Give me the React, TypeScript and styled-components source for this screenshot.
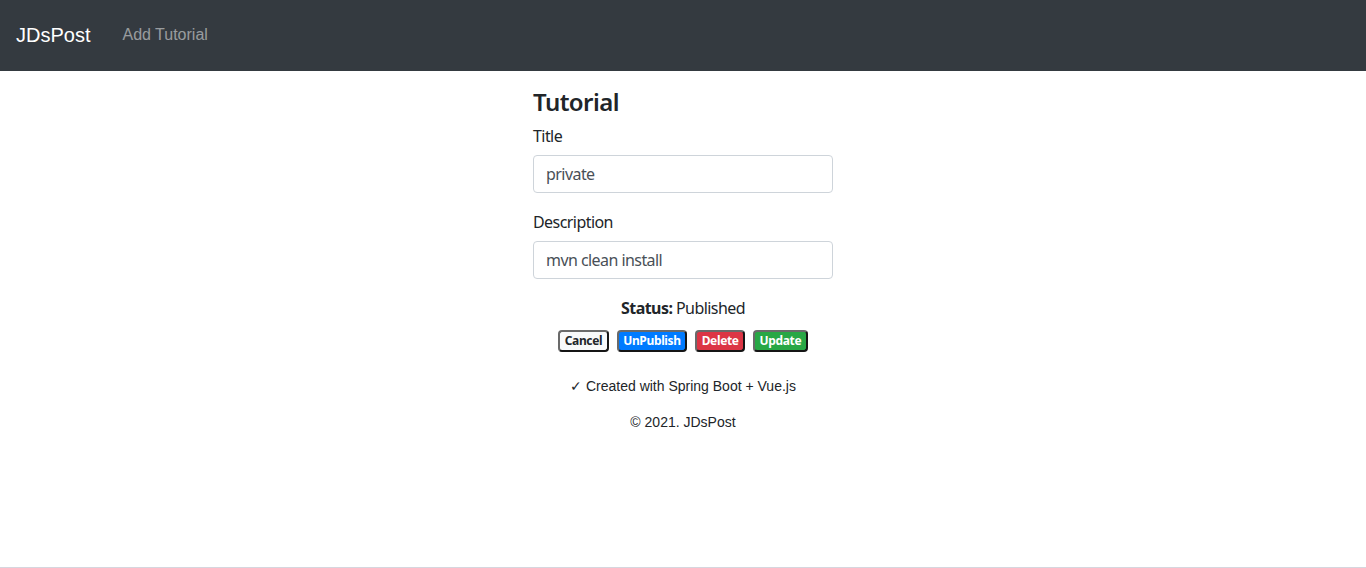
import React from "react";
import styled, { createGlobalStyle } from "styled-components";

const Global = createGlobalStyle`
  * { box-sizing: border-box; }
  html, body { margin: 0; padding: 0; }
  body {
    font-family: "Noto Sans", "Open Sans", sans-serif;
    font-size: 16px;
    line-height: 1.5;
    color: #212529;
    background: #fff;
    letter-spacing: -0.035em;
  }
`;

const Page = styled.div`
  min-height: 568px;
  border-bottom: 1px solid #d6d6de;
  display: flex;
  flex-direction: column;
`;

const Navbar = styled.nav`
  height: 71px;
  background: #343a40;
  display: flex;
  align-items: center;
  padding: 0 16px 2px;
  font-family: "Liberation Sans", Arial, sans-serif;
  letter-spacing: 0;
`;

const Brand = styled.a`
  color: #fff;
  font-size: 20px;
  margin-right: 32px;
  text-decoration: none;
`;

const NavLink = styled.a`
  color: rgba(255, 255, 255, 0.5);
  font-size: 16px;
  text-decoration: none;
`;

const Container = styled.main`
  width: 300px;
  margin: 17px auto 0;
`;

const Heading = styled.h4`
  font-size: 24px;
  font-weight: 600;
  line-height: 1.2;
  margin: 0 0 7px;
`;

const FormGroup = styled.div`
  margin-bottom: 17px;
`;

const Label = styled.label`
  display: block;
  margin-bottom: 7px;
`;

const Input = styled.input`
  display: block;
  width: 100%;
  height: 38px;
  padding: 6px 12px;
  font-family: inherit;
  font-size: 16px;
  letter-spacing: inherit;
  color: #495057;
  border: 1px solid #ced4da;
  border-radius: 4px;
  background: #fff;
`;

const Status = styled.div`
  text-align: center;
`;

const Actions = styled.div`
  display: flex;
  justify-content: center;
  gap: 8px;
  margin-top: 10px;
`;

const Badge = styled.button<{ $bg: string; $fg: string }>`
  font-family: "Noto Sans", "Open Sans", sans-serif;
  font-size: 12px;
  font-weight: 700;
  letter-spacing: -0.03em;
  line-height: 1;
  height: 22px;
  padding: 3px 4.5px;
  border: 2px outset #6a6a6a;
  border-radius: 4px;
  background: ${(p) => p.$bg};
  color: ${(p) => p.$fg};
  cursor: pointer;
`;

const Footer = styled.footer`
  font-family: "Liberation Sans", Arial, sans-serif;
  font-size: 14px;
  letter-spacing: 0;
  color: #212529;
  text-align: center;
  margin-top: 26px;
  display: flex;
  flex-direction: column;
  gap: 20px;
  line-height: 16px;
`;

export default function App() {
  return (
    <>
      <Global />
      <Page>
        <Navbar>
          <Brand href="#">JDsPost</Brand>
          <NavLink href="#">Add Tutorial</NavLink>
        </Navbar>
        <Container>
          <Heading>Tutorial</Heading>
          <form>
            <FormGroup>
              <Label htmlFor="title">Title</Label>
              <Input id="title" defaultValue="private" />
            </FormGroup>
            <FormGroup>
              <Label htmlFor="description">Description</Label>
              <Input id="description" defaultValue="mvn clean install" />
            </FormGroup>
          </form>
          <Status>
            <strong>Status:</strong> Published
          </Status>
          <Actions>
            <Badge $bg="#f8f9fa" $fg="#212529">Cancel</Badge>
            <Badge $bg="#007bff" $fg="#fff">UnPublish</Badge>
            <Badge $bg="#dc3545" $fg="#fff">Delete</Badge>
            <Badge $bg="#28a745" $fg="#fff">Update</Badge>
          </Actions>
          <Footer>
            <div>✓ Created with Spring Boot + Vue.js</div>
            <div>© 2021. JDsPost</div>
          </Footer>
        </Container>
      </Page>
    </>
  );
}
